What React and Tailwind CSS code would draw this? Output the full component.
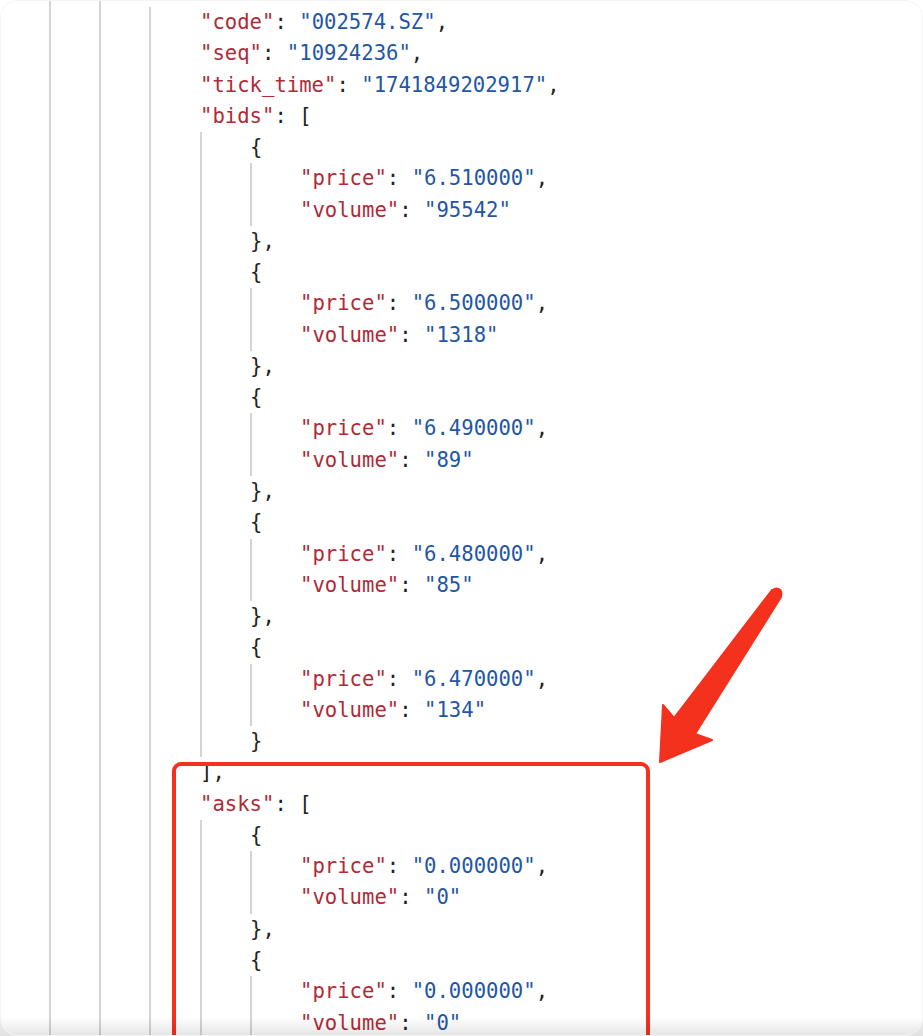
const Key = ({ k }) => <span className="text-[#b02a37]">"{k}"</span>;
const Str = ({ v }) => <span className="text-[#2356a3]">"{v}"</span>;

function Row({ children }) {
  return <div className="h-[31.28px] leading-[31.28px] whitespace-pre">{children}</div>;
}

function Pair({ k, v, last }) {
  return (
    <Row>
      <Key k={k} />: <Str v={v} />
      {last ? "" : ","}
    </Row>
  );
}

function Guide({ children, className = "" }) {
  return <div className={"border-l-2 border-[#d4d4d4] " + className}>{children}</div>;
}

function Entry({ price, volume, last }) {
  return (
    <>
      <Row>{"{"}</Row>
      <Guide className="pl-[48px]">
        <Pair k="price" v={price} />
        <Pair k="volume" v={volume} last />
      </Guide>
      <Row>{last ? "}" : "},"}</Row>
    </>
  );
}

const bids = [
  ["6.510000", "95542"],
  ["6.500000", "1318"],
  ["6.490000", "89"],
  ["6.480000", "85"],
  ["6.470000", "134"],
];

const asks = [
  ["0.000000", "0"],
  ["0.000000", "0"],
];

export default function App() {
  return (
    <div className="h-[1036px] w-full overflow-hidden bg-gradient-to-b from-white from-[95%] to-[#e2e2e2]">
      <div className="relative h-full overflow-hidden rounded-[18px] border border-[#f4f4f4] bg-white font-['DejaVu_Sans_Mono','Liberation_Mono',monospace] text-[20.6px] text-[#222]">
        {/* JSON TREE */}
        <Guide className="ml-[48px] h-full pl-[48px]">
          <Guide className="h-full pl-[48px] pt-[6px]">
            <Guide className="pl-[49px]">
              <Pair k="code" v="002574.SZ" />
              <Pair k="seq" v="10924236" />
              <Pair k="tick_time" v="1741849202917" />
              <Row>
                <Key k="bids" />: [
              </Row>
              <Guide className="pl-[48px]">
                {bids.map((b, i) => (
                  <Entry key={i} price={b[0]} volume={b[1]} last={i === bids.length - 1} />
                ))}
              </Guide>
              <Row>],</Row>
              <Row>
                <Key k="asks" />: [
              </Row>
              <Guide className="pl-[48px]">
                {asks.map((a, i) => (
                  <Entry key={i} price={a[0]} volume={a[1]} last={i === asks.length - 1} />
                ))}
              </Guide>
            </Guide>
          </Guide>
        </Guide>

        {/* HIGHLIGHT BOX */}
        <div className="absolute left-[171px] top-[761px] h-[400px] w-[478px] rounded-[9px] border-4 border-[#f4311d]" />

        {/* ARROW */}
        <svg className="pointer-events-none absolute left-0 top-0" width="923" height="1036" viewBox="0 0 923 1036">
          <polygon
            points="659,761 662,704 673,717 771,589 780,596 694,733 711,739"
            fill="#f4311d"
            stroke="#f4311d"
            strokeWidth="2"
            strokeLinejoin="round"
          />
          <circle cx="775.5" cy="592.5" r="6" fill="#f4311d" />
        </svg>

        {/* BOTTOM SHADE */}
        <div className="pointer-events-none absolute bottom-0 left-0 h-[18px] w-full bg-gradient-to-b from-black/0 to-black/10" />
      </div>
    </div>
  );
}
